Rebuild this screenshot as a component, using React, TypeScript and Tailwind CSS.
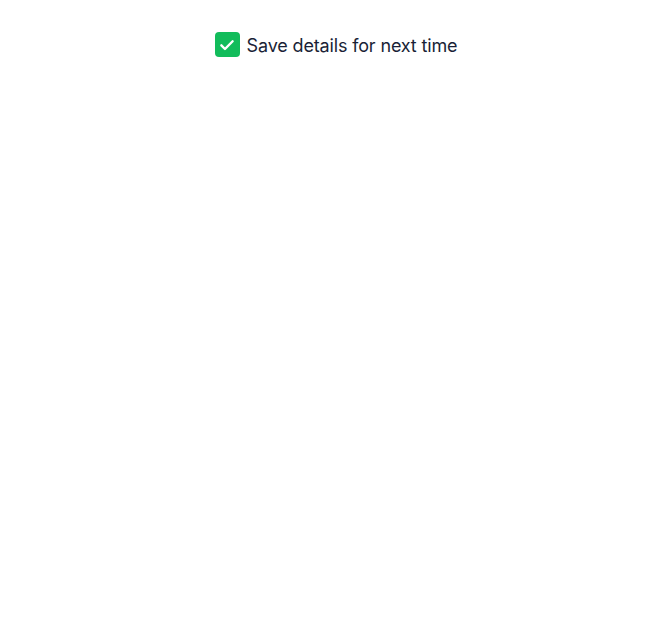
import React from "react";

export default function App() {
  return (
    <div className="flex items-start justify-center pt-[31px] bg-white min-h-[640px]" style={{ fontFamily: "Inter, 'Noto Sans', sans-serif" }}>
      <label className="flex items-center gap-[7px]">
        <span className="flex h-[25px] w-[25px] items-center justify-center rounded-[4px] bg-[#12bc5b]">
          <svg width="18" height="18" viewBox="0 0 24 24" fill="none" stroke="white" strokeWidth="3.2" strokeLinecap="round" strokeLinejoin="round">
            <path d="M4.5 12.5l4.8 4.8L19.5 7" />
          </svg>
        </span>
        <span className="text-[18px] leading-[25px] pt-[2px] text-[#1a1f36] tracking-[-0.15px]">Save details for next time</span>
      </label>
    </div>
  );
}
